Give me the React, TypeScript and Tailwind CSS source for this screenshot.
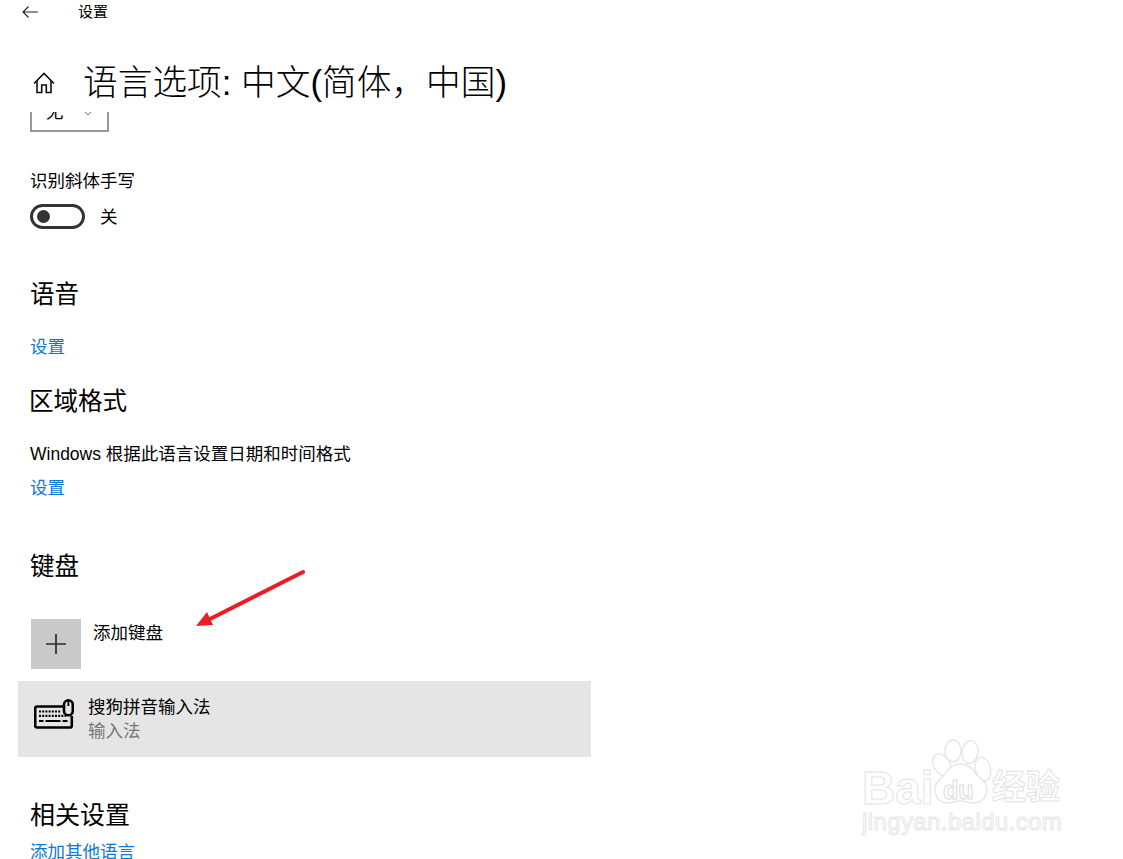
import { ChevronDown } from "lucide-react";

const cjk = "font-['Liberation_Sans','Noto_Sans_CJK_SC',sans-serif]";

const BackIcon = () => (
  <svg width="16" height="12" viewBox="0 0 16 12" fill="none" stroke="#222" strokeWidth="1.1">
    <path d="M16 6H1M6.5.5L1 6l5.500 5.500" />
  </svg>
);

const HomeIcon = () => (
  <svg width="22" height="22" viewBox="0 0 22 22" fill="none" stroke="#111" strokeWidth="1.6">
    <path d="M1 11.500L11 1.500l10 10" />
    <path d="M4 8.500V20.500h4.700V13h4.600v7.500H18V8.500" />
  </svg>
);

const PlusIcon = () => (
  <svg width="20" height="20" viewBox="0 0 20 20" fill="none" stroke="#2b2b2b" strokeWidth="1.7">
    <path d="M10 0v20M0 10h20" />
  </svg>
);

const KeyboardIcon = () => (
  <svg width="40" height="31" viewBox="0 0 40 31" fill="none" stroke="#000" strokeWidth="2.6">
    <path d="M29 7.500H3a1.800 1.800 0 0 0-1.800 1.800v17.400A1.800 1.800 0 0 0 3 28.500h33a1.800 1.800 0 0 0 1.800-1.800V17" />
    <rect x="30" y="1.300" width="8.800" height="15" rx="4.400" />
    <path d="M34.400 2v5" strokeWidth="1.800" />
    <path d="M5 12.500h22M5 16.800h27" strokeWidth="2.200" strokeDasharray="2 1.200" />
    <path d="M5 22h4.500M11.500 22h15M28.500 22h5" strokeWidth="2.200" />
  </svg>
);

const BaiduWatermark = () => (
  <div className="absolute left-[860px] top-[738px] w-[210px] h-[100px]">
    <svg className="absolute left-0 top-0" width="210" height="72" viewBox="0 0 210 72" fill="#fff" stroke="#e6e6e6" strokeWidth="1.4">
      <ellipse cx="82" cy="27" rx="8" ry="12" transform="rotate(-30 82 27)" />
      <ellipse cx="93" cy="13" rx="8" ry="11" />
      <ellipse cx="110" cy="14" rx="8" ry="11.500" transform="rotate(8 110 14)" />
      <ellipse cx="123" cy="31" rx="7.500" ry="12" transform="rotate(-15 123 31)" />
      <path d="M100 26c-7 0-11 4-14 9-3 4-11 8-11 16 0 8 5 14 12 14 5 0 8-2 13-2s8 2 14 2c7 0 13-6 13-14 0-8-8-11-12-16-3-5-8-9-15-9z" />
    </svg>
    <div className="absolute left-[2px] top-[32px] font-['Liberation_Sans',sans-serif] font-bold text-[46px] leading-[36px] text-white [-webkit-text-stroke:1px_#e4e4e4]">
      Bai
    </div>
    <div className="absolute left-[83px] top-[39px] font-['Liberation_Sans',sans-serif] font-bold text-[25px] leading-[26px] text-white [-webkit-text-stroke:1px_#dcdcdc]">
      du
    </div>
    <div className="absolute left-[132px] top-[29px] font-['Noto_Sans_CJK_SC',sans-serif] font-bold text-[34px] leading-[36px] text-white [-webkit-text-stroke:1px_#e4e4e4]">
      经验
    </div>
    <div className="absolute left-[2px] top-[70px] font-['Liberation_Sans',sans-serif] text-[24px] leading-[28px] tracking-[0.4px] text-white [-webkit-text-stroke:1px_#e6e6e6]">
      jingyan.baidu.com
    </div>
  </div>
);

const RedArrow = () => (
  <svg className="absolute left-[190px] top-[565px]" width="120" height="65" viewBox="0 0 120 65" fill="none">
    <path d="M113 7L20 54" stroke="#ed1c24" strokeWidth="4" strokeLinecap="round" />
    <path d="M6 61L17 47L23 60z" fill="#ed1c24" />
  </svg>
);

export default function App() {
  return (
    <div className={`relative w-[1123px] h-[859px] overflow-hidden bg-white text-black ${cjk}`}>
      {/* 顶部栏 */}
      <div className="flex items-center h-6 pl-[22px]">
        <BackIcon />
        <span className="ml-[40px] text-[15px] leading-6">设置</span>
      </div>

      {/* 标题 */}
      <div className="flex items-center h-[88px] pt-[30px] pl-[33px]">
        <HomeIcon />
        <h1 className="ml-[28px] text-[34.7px] leading-[48px] font-light whitespace-nowrap">语言选项: 中文(简体，中国)</h1>
      </div>

      {/* 滚动内容 */}
      <div className="h-[747px] overflow-hidden">
        <div className="-mt-[18px] pl-[30px] w-[591px]">
          <div className="flex items-center justify-between w-[79px] h-[38px] pl-[14px] pr-[11px] border-2 border-[#999]">
            <span className="text-[17.5px] leading-none">无</span>
            <ChevronDown size={16} strokeWidth={1.2} className="text-[#444]" />
          </div>

          <p className="mt-[37px] text-[17.5px] leading-6">识别斜体手写</p>
          <div className="flex items-center mt-[11px]">
            <div className="flex items-center w-[55px] h-[25px] pl-[4px] rounded-full border-[3px] border-[#333]">
              <div className="w-[13px] h-[13px] rounded-full bg-[#333]" />
            </div>
            <span className="ml-[15px] text-[17.5px] leading-6">关</span>
          </div>

          <h2 className="mt-[49px] text-[24.5px] leading-[34px] font-normal">语音</h2>
          <a className="block mt-[23px] text-[17.5px] leading-6 text-[#0a78d4]">设置</a>

          <h2 className="mt-[26px] -ml-px text-[24.5px] leading-[34px] font-normal">区域格式</h2>
          <p className="mt-[23px] text-[17.5px] leading-6 whitespace-nowrap">Windows 根据此语言设置日期和时间格式</p>
          <a className="block mt-[10px] text-[17.5px] leading-6 text-[#0a78d4]">设置</a>

          <h2 className="mt-[50px] text-[24.5px] leading-[34px] font-normal">键盘</h2>

          <div className="flex items-start mt-[35px]">
            <div className="flex items-center justify-center w-[50px] h-[50px] ml-px bg-[#c9c9c9]">
              <PlusIcon />
            </div>
            <span className="ml-3 mt-[2px] text-[17.5px] leading-6">添加键盘</span>
          </div>

          <div className="flex items-start -ml-3 mt-3 h-[76px] pl-[16px] bg-[#e5e5e5]">
            <div className="mt-[18px]">
              <KeyboardIcon />
            </div>
            <div className="ml-[14px] pt-[14px]">
              <p className="text-[17.5px] leading-6">搜狗拼音输入法</p>
              <p className="text-[17.5px] leading-6 text-[#767676]">输入法</p>
            </div>
          </div>

          <h2 className="mt-[41px] text-[25px] leading-[34px] font-normal">相关设置</h2>
          <a className="block mt-[8px] text-[17.5px] leading-6 text-[#0a78d4]">添加其他语言</a>
        </div>
      </div>

      <RedArrow />
      <BaiduWatermark />
    </div>
  );
}
